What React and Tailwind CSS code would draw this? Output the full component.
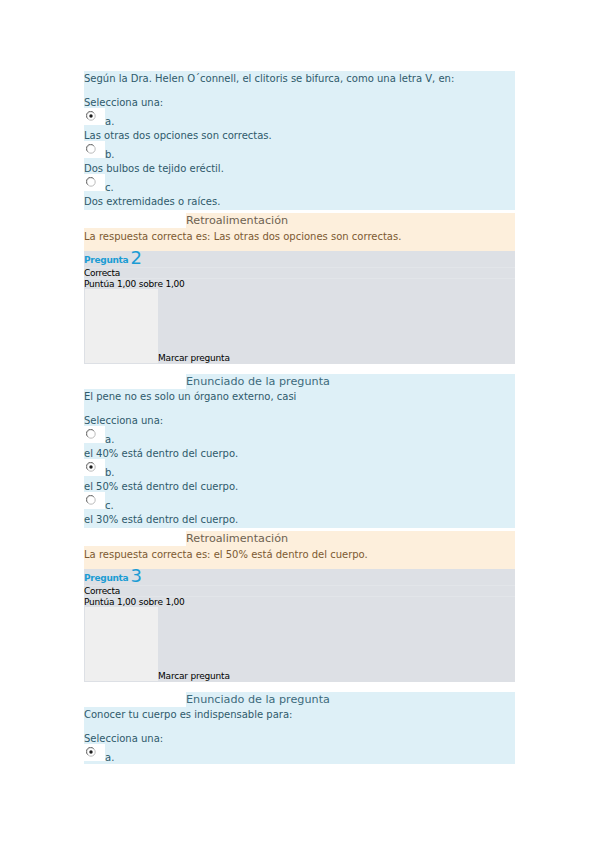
import React from "react";

function Radio({ checked }) {
  return (
    <svg width="10" height="10" viewBox="0 0 10 10">
      <circle cx="5" cy="5" r="4.2" fill="#fff" stroke="#b4b4b4" strokeWidth="0.9" />
      <path d="M1.6 7.6 A4.2 4.2 0 0 1 7.6 1.6" fill="none" stroke="#6a6a6a" strokeWidth="0.9" />
      {checked && <circle cx="5" cy="5" r="1.7" fill="#1f1f1f" />}
    </svg>
  );
}

function Option({ letter, text, checked }) {
  return (
    <div>
      <div className="flex h-[20px] items-end">
        <span className="flex h-[17px] w-[21px] self-start bg-white pl-[2px] pt-[3px]">
          <Radio checked={checked} />
        </span>
        <span className="mb-[1px] leading-[10px]">{letter}</span>
      </div>
      {text && <div className="h-[13px] pt-[2px] leading-[12px]">{text}</div>}
    </div>
  );
}

function Heading({ children, bg, color }) {
  return (
    <div className="flex h-[15px]">
      <div className="w-[102px] bg-white" />
      <div className={`flex-1 pt-[1px] text-[11.2px] leading-[14px] ${bg} ${color}`}>{children}</div>
    </div>
  );
}

function Question({ heading, prompt, options, last }) {
  return (
    <div>
      {heading && (
        <Heading bg="bg-[#def0f7]" color="text-[#3d6b7c]">
          Enunciado de la pregunta
        </Heading>
      )}
      <div className={`bg-[#def0f7] text-[10px] text-[#2e5a6b] ${last ? "" : "pb-[3px]"}`}>
        <div className="h-[13px] pt-[1px] leading-[13px]">{prompt}</div>
        <div className="mt-[11px] h-[13px] pt-[1px] leading-[13px]">Selecciona una:</div>
        {options.map((o) => (
          <Option key={o.letter} {...o} />
        ))}
      </div>
    </div>
  );
}

function Feedback({ answer }) {
  return (
    <div className="mt-[3px]">
      <Heading bg="bg-[#fdefdc]" color="text-[#6e6252]">
        Retroalimentación
      </Heading>
      <div className="h-[23px] bg-[#fdefdc] pt-[2px] text-[10px] leading-[14px] text-[#7c5a32]">
        La respuesta correcta es: {answer}
      </div>
    </div>
  );
}

function Info({ num }) {
  return (
    <div className="h-[113px] bg-[#dde0e5] text-[9px] text-black">
      <div className="flex h-[17px] items-end border-b border-[#e2e5e9] pb-[1px] text-[#1b9cd4]">
        <span className="text-[9px] font-bold leading-[11px] tracking-[-0.3px]">Pregunta</span>
        <span className="ml-[2px] text-[18px] leading-[17px]">{num}</span>
      </div>
      <div className="h-[11px] border-b border-[#e2e5e9] leading-[11px] tracking-[-0.3px]">Correcta</div>
      <div className="h-[10px] leading-[10px] tracking-[-0.2px]">Puntúa 1,00 sobre 1,00</div>
      <div className="flex">
        <div className="ml-[1px] h-[74px] w-[73px] bg-[#efefef]" />
        <span className="self-end leading-[10px] tracking-[-0.2px]">Marcar pregunta</span>
      </div>
    </div>
  );
}

export default function App() {
  return (
    <div className="min-h-[848px] w-[599px] bg-white pt-[71px] font-['DejaVu_Sans',sans-serif]">
      <div className="mx-[84px]">
        <Question
          prompt="Según la Dra. Helen O´connell, el clitoris se bifurca, como una letra V, en:"
          options={[
            { letter: "a.", text: "Las otras dos opciones son correctas.", checked: true },
            { letter: "b.", text: "Dos bulbos de tejido eréctil." },
            { letter: "c.", text: "Dos extremidades o raíces." },
          ]}
        />
        <Feedback answer="Las otras dos opciones son correctas." />
        <Info num="2" />

        <div className="mt-[10px]">
          <Question
            heading
            prompt="El pene no es solo un órgano externo, casi"
            options={[
              { letter: "a.", text: "el 40% está dentro del cuerpo." },
              { letter: "b.", text: "el 50% está dentro del cuerpo.", checked: true },
              { letter: "c.", text: "el 30% está dentro del cuerpo." },
            ]}
          />
        </div>
        <Feedback answer="el 50% está dentro del cuerpo." />
        <Info num="3" />

        <div className="mt-[10px]">
          <Question
            heading
            last
            prompt="Conocer tu cuerpo es indispensable para:"
            options={[{ letter: "a.", checked: true }]}
          />
        </div>
      </div>
    </div>
  );
}
